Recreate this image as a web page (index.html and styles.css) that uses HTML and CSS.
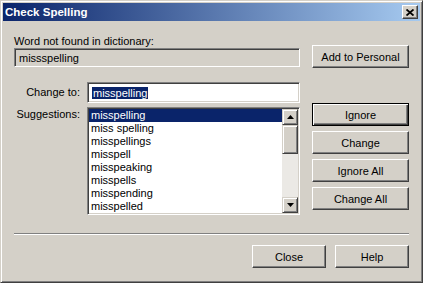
FILE: index.html
```html
<!DOCTYPE html>
<html lang="en">
<head>
  <meta charset="UTF-8" />
  <meta name="viewport" content="width=device-width, initial-scale=1" />
  <title>Check Spelling</title>
  <link rel="stylesheet" href="styles.css">
</head>
<body>
  <div class="window">
    <div class="titlebar">
      <span class="title">Check Spelling</span>
      <button class="close-btn" aria-label="Close">
        <svg width="8" height="7" viewBox="0 0 8 7">
          <path d="M0.5 0.5 L7.5 6.5 M7.5 0.5 L0.5 6.5" stroke="#000" stroke-width="1.8" fill="none"/>
        </svg>
      </button>
    </div>

    <div class="content">
      <!-- Kata yang tidak ditemukan -->
      <div class="row-top">
        <div class="word-box">
          <div class="label">Word not found in dictionary:</div>
          <div class="field readonly">missspelling</div>
        </div>
        <button class="btn">Add to Personal</button>
      </div>

      <div class="row-main">
        <div class="form">
          <div class="form-row">
            <label class="side">Change to:</label>
            <div class="field input"><span class="sel">misspelling</span></div>
          </div>
          <div class="form-row top">
            <label class="side">Suggestions:</label>
            <div class="listbox">
              <ul class="items">
                <li class="selected">misspelling</li>
                <li>miss spelling</li>
                <li>misspellings</li>
                <li>misspell</li>
                <li>misspeaking</li>
                <li>misspells</li>
                <li>misspending</li>
                <li>misspelled</li>
              </ul>
              <div class="scrollbar">
                <div class="sb-btn">
                  <svg width="7" height="4" viewBox="0 0 7 4"><path d="M3.5 0 L7 4 L0 4 Z" fill="#000"/></svg>
                </div>
                <div class="sb-thumb"></div>
                <div class="sb-track"></div>
                <div class="sb-btn">
                  <svg width="7" height="4" viewBox="0 0 7 4"><path d="M0 0 L7 0 L3.5 4 Z" fill="#000"/></svg>
                </div>
              </div>
            </div>
          </div>
        </div>

        <div class="actions">
          <button class="btn default">Ignore</button>
          <button class="btn">Change</button>
          <button class="btn">Ignore All</button>
          <button class="btn">Change All</button>
        </div>
      </div>

      <div class="separator"></div>

      <div class="footer">
        <button class="btn small">Close</button>
        <button class="btn small">Help</button>
      </div>
    </div>
  </div>
</body>
</html>
```

FILE: styles.css
```css
/* Reset dasar */
* {
  margin: 0;
  padding: 0;
  box-sizing: border-box;
}
body {
  background: #d4d0c8;
  font-family: "Liberation Sans", Arial, sans-serif;
  font-size: 11px;
  color: #000;
}
.window {
  width: 423px;
  height: 283px;
  background: #d4d0c8;
  border: 1px solid;
  border-color: #d4d0c8 #404040 #404040 #d4d0c8;
  box-shadow: inset 1px 1px #fff, inset -1px -1px #808080;
  padding: 2px;
  display: flex;
  flex-direction: column;
}
.titlebar {
  height: 18px;
  background: linear-gradient(to right, #0a246a, #a6caf0);
  display: flex;
  align-items: center;
  justify-content: space-between;
  padding: 0 2px 0 2px;
}
.title {
  color: #fff;
  font-weight: bold;
  font-size: 11.5px;
}
.close-btn {
  width: 16px;
  height: 14px;
  background: #d4d0c8;
  border: 1px solid;
  border-color: #fff #404040 #404040 #fff;
  box-shadow: inset -1px -1px #808080;
  display: flex;
  align-items: center;
  justify-content: center;
}
.content {
  padding: 14px 11px 0 11px;
  display: flex;
  flex-direction: column;
}
.label {
  line-height: 13px;
}
/* Tombol gaya klasik */
.btn {
  width: 97px;
  height: 23px;
  background: #d4d0c8;
  border: 1px solid;
  border-color: #fff #404040 #404040 #fff;
  box-shadow: inset -1px -1px #808080;
  font: inherit;
  color: #000;
}
.btn.default {
  border-color: #000;
  box-shadow: inset 1px 1px #fff, inset -1px -1px #404040, inset -2px -2px #808080;
}
.btn.small {
  width: 74px;
}
/* Field cekung */
.field {
  border: 1px solid;
  border-color: #808080 #fff #fff #808080;
  box-shadow: inset 1px 1px #404040, inset -1px -1px #d4d0c8;
  display: flex;
  align-items: center;
  padding: 0 4px;
}
.row-top {
  display: flex;
  align-items: flex-end;
  gap: 12px;
}
.word-box {
  width: 286px;
  margin-bottom: 1px;
}
.readonly {
  height: 19px;
  background: #d4d0c8;
}
.row-main {
  display: flex;
  gap: 12px;
  margin-top: 14px;
}
.form {
  width: 286px;
  display: flex;
  flex-direction: column;
  gap: 4px;
}
.form-row {
  display: flex;
  align-items: center;
}
.form-row.top {
  align-items: flex-start;
}
.side {
  width: 73px;
  padding-right: 7px;
  text-align: right;
  line-height: 13px;
}
.form-row.top .side {
  padding-top: 1px;
}
.input {
  width: 213px;
  height: 21px;
  background: #fff;
}
.sel {
  background: #0a246a;
  color: #fff;
  line-height: 12px;
  padding: 0 1px;
}
.listbox {
  width: 213px;
  height: 108px;
  background: #fff;
  border: 1px solid;
  border-color: #808080 #fff #fff #808080;
  box-shadow: inset 1px 1px #404040, inset -1px -1px #d4d0c8;
  padding: 1px;
  display: flex;
}
.items {
  flex: 1;
  list-style: none;
}
.items li {
  height: 13px;
  line-height: 13px;
  padding-left: 2px;
}
.items li.selected {
  background: #0a246a;
  color: #fff;
}
.scrollbar {
  width: 16px;
  display: flex;
  flex-direction: column;
}
.sb-btn,
.sb-thumb {
  background: #d4d0c8;
  border: 1px solid;
  border-color: #d4d0c8 #404040 #404040 #d4d0c8;
  box-shadow: inset 1px 1px #fff, inset -1px -1px #808080;
}
.sb-btn {
  height: 16px;
  display: flex;
  align-items: center;
  justify-content: center;
}
.sb-thumb {
  height: 29px;
}
.sb-track {
  flex: 1;
  background: #ebe9e5;
}
.actions {
  display: flex;
  flex-direction: column;
  gap: 5px;
  padding-top: 21px;
}
.separator {
  margin-top: 18px;
  border-top: 1px solid #808080;
  border-bottom: 1px solid #fff;
}
.footer {
  margin-top: 10px;
  display: flex;
  justify-content: flex-end;
  gap: 9px;
}
```
